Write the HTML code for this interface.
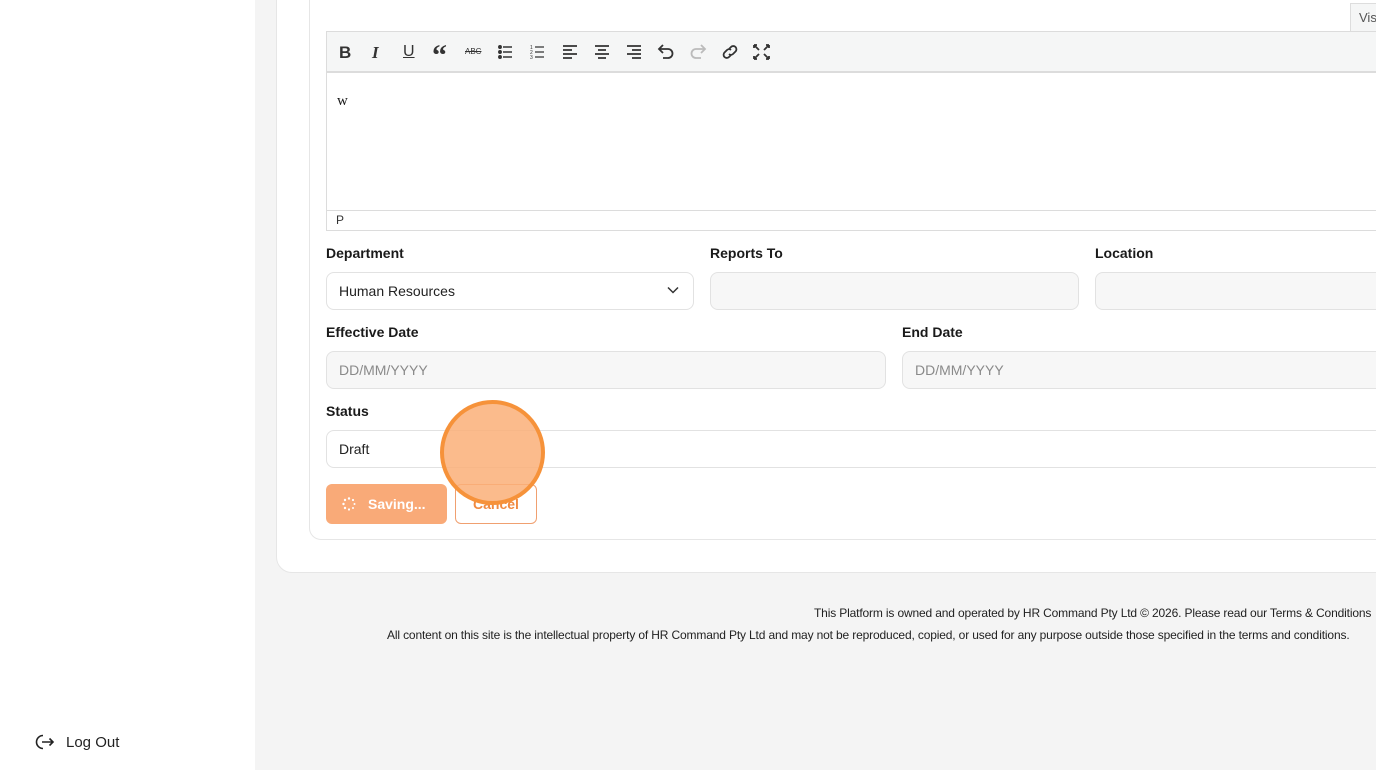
<!DOCTYPE html>
<html><head><meta charset="utf-8"><style>
*{box-sizing:border-box;margin:0;padding:0}
body{width:1376px;height:770px;overflow:hidden;background:#f4f4f4;font-family:"Liberation Sans",sans-serif;position:relative;color:#1b1b1b}
.abs{position:absolute}
.side{left:0;top:0;width:255px;height:770px;background:#fff}
.outer{left:276px;top:-20px;width:1120px;height:593px;background:#fff;border:1px solid #e6e6e6;border-radius:16px}
.inner{left:309px;top:-20px;width:1100px;height:560px;background:#fff;border:1px solid #e6e6e6;border-radius:12px}
.lbl{font-size:14px;font-weight:bold;color:#1a1a1a}
.inp{height:38px;border:1px solid #e2e2e2;border-radius:8px;font-size:14px;padding-left:12px;line-height:36px}
.gray{background:#f7f7f7;color:#8a8a8a}
.tb svg{position:absolute;top:44px}
.foot{font-size:12px;letter-spacing:-0.15px;white-space:nowrap;color:#222}
</style></head><body>
<div class="abs side"></div>
<div class="abs" style="left:34px;top:731px">
<svg width="22" height="22" viewBox="0 0 22 22" fill="none" stroke="#222" stroke-width="1.6"><path d="M9 4.5A6.5 6.5 0 1 0 9 17.5"/><path d="M8 11h11M15.5 7.5L19 11l-3.5 3.5"/></svg></div>
<div class="abs" style="left:66px;top:734px;font-size:15px;color:#222">Log Out</div>
<div class="abs outer"></div>
<div class="abs inner"></div>
<div class="abs" style="left:1350px;top:3px;width:40px;height:29px;background:#f5f6f6;border:1px solid #ddd;border-bottom:none;font-size:13px;color:#555;padding:6px 0 0 8px">Vis</div>
<div class="abs" style="left:326px;top:31px;width:1060px;height:200px;border:1px solid #dcdcdc;background:#fff"></div>
<div class="abs" style="left:327px;top:32px;width:1060px;height:41px;background:#f5f6f6;border-bottom:2px solid #dcdcdc"></div>
<div class="abs tb" style="left:0;top:0">
<div class="abs" style="left:339px;top:43px;font-weight:bold;font-size:17px;color:#333">B</div>
<div class="abs" style="left:372px;top:43px;font-style:italic;font-weight:bold;font-size:17px;color:#333;font-family:'Liberation Serif',serif">I</div>
<div class="abs" style="left:403px;top:43px;font-size:16px;color:#333;text-decoration:underline">U</div>
<div class="abs" style="left:432px;top:39px;font-weight:bold;font-size:30px;color:#333;font-family:'Liberation Serif',serif">“</div>
<div class="abs" style="left:465px;top:47px;font-size:8px;color:#333;text-decoration:line-through">ABC</div>
<svg style="left:498px" width="16" height="16" viewBox="0 0 16 16" stroke="#333" stroke-width="1.5"><circle cx="2" cy="3" r="1.2" fill="#333"/><circle cx="2" cy="8" r="1.2" fill="#333"/><circle cx="2" cy="13" r="1.2" fill="#333"/><path d="M5 3h9M5 8h9M5 13h9"/></svg>
<svg style="left:530px" width="16" height="16" viewBox="0 0 16 16" stroke="#333" stroke-width="1.2"><path d="M5 3h9M5 8h9M5 13h9"/><text x="0" y="5" font-size="5" fill="#333" stroke="none">1</text><text x="0" y="10" font-size="5" fill="#333" stroke="none">2</text><text x="0" y="15" font-size="5" fill="#333" stroke="none">3</text></svg>
<svg style="left:562px" width="16" height="16" viewBox="0 0 16 16" stroke="#333" stroke-width="1.8"><path d="M1 2h14M1 6h9M1 10h14M1 14h9"/></svg>
<svg style="left:594px" width="16" height="16" viewBox="0 0 16 16" stroke="#333" stroke-width="1.8"><path d="M1 2h14M4 6h8M1 10h14M4 14h8"/></svg>
<svg style="left:626px" width="16" height="16" viewBox="0 0 16 16" stroke="#333" stroke-width="1.8"><path d="M1 2h14M6 6h9M1 10h14M6 14h9"/></svg>
<svg style="left:657px" width="18" height="16" viewBox="0 0 18 16" fill="none" stroke="#333" stroke-width="1.8"><path d="M3 5h8a4.5 4.5 0 0 1 0 9H6"/><path d="M6 1L2 5l4 4" /></svg>
<svg style="left:689px" width="18" height="16" viewBox="0 0 18 16" fill="none" stroke="#bbb" stroke-width="1.8"><path d="M15 5H7a4.5 4.5 0 0 0 0 9h5"/><path d="M12 1l4 4-4 4"/></svg>
<svg style="left:721px" width="18" height="16" viewBox="0 0 18 16" fill="none" stroke="#333" stroke-width="1.8"><path d="M8 5l2-2a3 3 0 0 1 4.5 4.5l-2.5 2.5a3 3 0 0 1-4 0"/><path d="M10 11l-2 2a3 3 0 0 1-4.5-4.5L6 6a3 3 0 0 1 4 0"/></svg>
<svg style="left:753px" width="17" height="16" viewBox="0 0 17 16" fill="none" stroke="#333" stroke-width="1.8"><path d="M1 1l5 5M16 1l-5 5M1 15l5-5M16 15l-5-5M1 1h3M1 1v3M16 1h-3M16 1v3M1 15h3M1 15v-3M16 15h-3M16 15v-3"/></svg>
</div>
<div class="abs" style="left:337px;top:93px;font-family:'Liberation Serif',serif;font-size:15px">w</div>
<div class="abs" style="left:327px;top:210px;width:1060px;border-top:1px solid #dcdcdc;font-size:12px;padding:2px 0 0 9px;color:#333">P</div>
<div class="abs lbl" style="left:326px;top:245px">Department</div>
<div class="abs lbl" style="left:710px;top:245px">Reports To</div>
<div class="abs lbl" style="left:1095px;top:245px">Location</div>
<div class="abs inp" style="left:326px;top:272px;width:368px;background:#fff;color:#222">Human Resources
<svg class="abs" style="right:14px;top:13px" width="12" height="8" viewBox="0 0 12 8" fill="none" stroke="#333" stroke-width="1.5"><path d="M1 1.5l5 5 5-5"/></svg></div>
<div class="abs inp gray" style="left:710px;top:272px;width:369px"></div>
<div class="abs inp gray" style="left:1095px;top:272px;width:300px"></div>
<div class="abs lbl" style="left:326px;top:324px">Effective Date</div>
<div class="abs lbl" style="left:902px;top:324px">End Date</div>
<div class="abs inp gray" style="left:326px;top:351px;width:560px">DD/MM/YYYY</div>
<div class="abs inp gray" style="left:902px;top:351px;width:500px">DD/MM/YYYY</div>
<div class="abs lbl" style="left:326px;top:403px">Status</div>
<div class="abs inp" style="left:326px;top:430px;width:1070px;background:#fff;color:#222">Draft</div>
<div class="abs" style="left:326px;top:484px;width:121px;height:40px;background:#f9aa78;border-radius:6px;color:#fff;font-size:14px;font-weight:bold;line-height:40px;padding-left:42px">Saving...</div>
<svg class="abs" style="left:342px;top:497px" width="14" height="14" viewBox="0 0 14 14" fill="#fff"><circle cx="7" cy="1.5" r="1.2"/><circle cx="11" cy="3" r="1.1"/><circle cx="12.5" cy="7" r="1"/><circle cx="11" cy="11" r="1"/><circle cx="7" cy="12.5" r="1.1"/><circle cx="3" cy="11" r="1.2"/><circle cx="1.5" cy="7" r="1.2"/><circle cx="3" cy="3" r="1.2"/></svg>
<div class="abs" style="left:455px;top:484px;width:82px;height:40px;border:1px solid #f0a070;border-radius:6px;color:#f08a40;font-size:14px;font-weight:bold;line-height:38px;text-align:center">Cancel</div>
<div class="abs" style="left:440px;top:400px;width:105px;height:105px;border-radius:50%;background:rgba(250,175,120,0.85);border:4px solid #f6923a"></div>
<div class="abs foot" style="left:814px;top:606px">This Platform is owned and operated by HR Command Pty Ltd © 2026. Please read our Terms &amp; Conditions</div>
<div class="abs foot" style="left:387px;top:628px">All content on this site is the intellectual property of HR Command Pty Ltd and may not be reproduced, copied, or used for any purpose outside those specified in the terms and conditions.</div>
</body></html>
